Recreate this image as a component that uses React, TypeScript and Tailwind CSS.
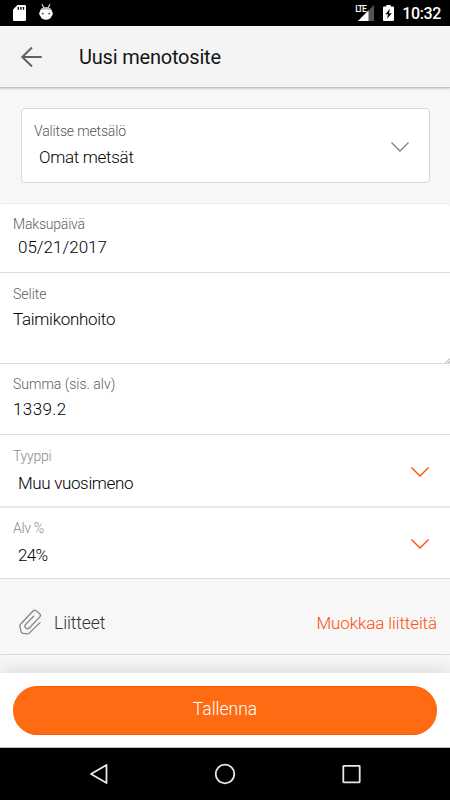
import React from 'react';
import clsx from 'clsx';

interface FieldProps {
  label: string;
  value: string;
  className?: string;
  labelClass?: string;
  valueClass?: string;
  chevron?: boolean;
  resizable?: boolean;
}

const Chevron: React.FC<{ className?: string }> = ({ className }) => (
  <svg viewBox="0 0 20 12" className={clsx('w-5 h-3 shrink-0', className)} fill="none" stroke="currentColor" strokeWidth="1.4">
    <path d="M1.5 1.6 L10 10.1 L18.5 1.6" />
  </svg>
);

const Field: React.FC<FieldProps> = ({ label, value, className, labelClass, valueClass, chevron, resizable }) => (
  <div className={clsx('flex justify-between border-[#dcdcdc] bg-white pl-[13px] pr-5', className)}>
    <div className="flex flex-col whitespace-nowrap">
      <span className={clsx('text-[14px] leading-5', labelClass)}>{label}</span>
      <span className={clsx('text-[17px] leading-5 text-black', valueClass)}>{value}</span>
    </div>
    {chevron && <Chevron className="mt-5 text-[#ff4d0d]" />}
    {resizable && (
      <svg viewBox="0 0 5 5" className="-mr-5 h-[5px] w-[5px] self-end" stroke="#777" strokeWidth="0.7">
        <path d="M0.5 5 L5 0.5 M3 5 L5 3" />
      </svg>
    )}
  </div>
);

const StatusBar: React.FC = () => (
  <div className="flex h-[26px] shrink-0 items-center bg-black text-white">
    <svg viewBox="0 0 13 16" className="ml-[13px] h-4 w-[13px]">
      <path d="M4.5 0 H12 Q13 0 13 1 V15 Q13 16 12 16 H1 Q0 16 0 15 V4.5Z" fill="#fff" />
      <path d="M5.3 2 V4.8 M7.9 2 V4.8 M10.5 2 V4.8" stroke="#000" strokeWidth="1.3" />
    </svg>
    <svg viewBox="0 0 14 16" className="-mt-0.5 ml-[13px] h-4 w-[14px]">
      <path d="M3 0.3 L5 4 M11 0.3 L9 4" stroke="#ddd" strokeWidth="1.2" />
      <path d="M1.2 6.5 Q2 2.9 7 2.9 Q12 2.9 12.8 6.5Z" fill="#bbb" />
      <path d="M1.2 6 Q7 4.8 12.8 6 V7.5 L13.8 8.5 Q14 11 12.6 12 Q11.5 15.8 7 15.8 Q2.5 15.8 1.4 12 Q0 11 0.2 8.5 L1.2 7.5Z" fill="#fff" />
      <circle cx="3.8" cy="9.6" r="0.9" fill="#333" />
      <circle cx="10.2" cy="9.6" r="0.9" fill="#333" />
    </svg>
    <div className="ml-auto flex items-center">
      <div className="relative h-4 w-[19px]">
        <svg viewBox="0 0 19 16" className="h-4 w-[19px]">
          <path d="M19 0 V16 H3Z" fill="#555" />
          <path d="M13.5 5.5 V16 H3Z" fill="#fff" />
        </svg>
        <span className="absolute left-0 top-0 h-[7px] w-[11px] whitespace-nowrap bg-black text-[8.5px] font-medium leading-[8px] tracking-[-0.9px]">LTE</span>
      </div>
      <svg viewBox="0 0 11 16" className="ml-[9px] h-4 w-[11px]">
        <path d="M3.3 0 H7.7 V1.5 H10 Q11 1.5 11 2.5 V15 Q11 16 10 16 H1 Q0 16 0 15 V2.5 Q0 1.5 1 1.5 H3.3Z" fill="#fff" />
        <path d="M7 3.8 L2.3 9.2 H5 L4 13.8 L8.8 8.2 H6Z" fill="#000" />
      </svg>
      <span className="ml-2 mr-[9px] mt-0.5 text-base font-medium leading-5 tracking-[-0.35px]">10:32</span>
    </div>
  </div>
);

const App: React.FC = () => {
  return (
    <div className="flex h-[800px] w-[450px] flex-col overflow-hidden bg-[#f7f7f7] font-['Roboto','Liberation_Sans',sans-serif] font-light">
      <StatusBar />

      {/* Header */}
      <header className="z-10 flex h-[62px] shrink-0 items-center border-b border-[#c4c4c4] bg-[#f4f4f4] shadow-[0_1px_2px_rgba(0,0,0,0.18)]">
        <svg viewBox="0 0 22 22" className="ml-5 h-[22px] w-[22px]" fill="none" stroke="#616161" strokeWidth="2">
          <path d="M12 1.5 L2.3 11 L12 20.5 M2.3 11 H21.7" />
        </svg>
        <h1 className="ml-[37px] text-xl font-normal leading-6 tracking-[-0.2px] text-[#151515]">Uusi menotosite</h1>
      </header>

      {/* Forest estate selector */}
      <div className="ml-[21px] mr-5 mt-5 flex h-[75px] shrink-0 justify-between rounded-[4px] border border-[#d9d9d9] bg-white pl-3 pr-[19px] pt-3">
        <div className="flex flex-col whitespace-nowrap">
          <span className="text-[14px] leading-5 tracking-[-0.15px] text-[#555]">Valitse metsälö</span>
          <span className="ml-[5px] mt-1.5 text-[17px] leading-5 tracking-[-0.3px] text-black">Omat metsät</span>
        </div>
        <Chevron className="mt-5 text-[#858585]" />
      </div>

      {/* Receipt details */}
      <div className="mt-5 flex shrink-0 flex-col">
        <Field label="Maksupäivä" value="05/21/2017" className="h-[70px] rounded-t-[4px] border-b border-t border-t-[#ececec] pt-2.5" labelClass="tracking-[-0.2px] text-[#606060]" valueClass="ml-[5px] mt-[3px]" />
        <Field label="Selite" value="Taimikonhoito" className="h-[91px] border-b pt-[11px]" labelClass="text-[#606060]" valueClass="mt-[5px] tracking-[-0.28px]" resizable />
        <Field label="Summa (sis. alv)" value="1339.2" className="h-[71px] border-b pt-2.5" labelClass="text-[#606060]" valueClass="mt-[5px] tracking-[0.4px]" />
        <Field label="Tyyppi" value="Muu vuosimeno" className="h-[73px] border-b-2 border-b-[#e8e8e8] pt-[11px]" labelClass="tracking-[-0.25px] text-[#8a8a8a]" valueClass="ml-[5px] mt-[7px] tracking-[-0.35px]" chevron />
        <Field label="Alv %" value="24%" className="h-[71px] border-b pt-2.5" labelClass="tracking-[-0.3px] text-[#8a8a8a]" valueClass="ml-[5px] mt-[7px] tracking-[-0.7px]" chevron />
      </div>

      {/* Attachments */}
      <div className="flex h-[76px] shrink-0 items-center border-b border-[#dcdcdc] pl-[18px] pr-[13px] pt-3">
        <svg viewBox="0 0 24 26" className="-mt-0.5 h-[26px] w-6" fill="none" stroke="#858585" strokeWidth="1.3" strokeLinecap="round" strokeLinejoin="round">
          <path d="M22 13.6 L11.8 23.6 Q10.6 24.9 9 24.8 L5.2 24.4 Q3.4 24.1 3 22.3 L1.9 17.7 Q1.5 16.2 2.7 15 L15 2 Q16.7 0.5 18.2 1.8 L21.7 4.7 Q23.2 6.2 21.8 7.9 L11.5 18.8 Q9.6 20.6 7.9 19.2 Q6 17.7 7.5 15.6 L15.6 7.2" />
        </svg>
        <span className="ml-3 text-[17.5px] leading-5 tracking-[-0.1px] text-[#333]">Liitteet</span>
        <button className="ml-auto whitespace-nowrap text-[17px] leading-5 tracking-[-0.1px] text-[#ff4d0d]">Muokkaa liitteitä</button>
      </div>

      {/* Save */}
      <div className="mt-auto flex h-[75px] shrink-0 border-b border-[#bdbdbd] bg-white px-[13px] pt-[13px] shadow-[0_-2px_18px_rgba(0,0,0,0.13)]">
        <button className="h-[49px] w-full rounded-full border-y border-[#ff5a00] bg-[#ff6b12] pb-0.5 text-[17.5px] text-white">
          Tallenna
        </button>
      </div>

      {/* Navigation bar */}
      <nav className="flex h-[52px] shrink-0 items-center justify-between bg-black px-[89px]">
        <svg viewBox="0 0 20 22" className="h-[22px] w-5" fill="none" stroke="#e8e8e8" strokeWidth="1.8" strokeLinejoin="round">
          <path d="M17.5 2 V20 L2 11Z" />
        </svg>
        <svg viewBox="0 0 22 22" className="h-[22px] w-[22px]" fill="none" stroke="#e8e8e8" strokeWidth="1.8">
          <circle cx="11" cy="11" r="9.3" />
        </svg>
        <svg viewBox="0 0 20 20" className="h-5 w-5" fill="none" stroke="#e8e8e8" strokeWidth="1.8">
          <rect x="2.3" y="1.9" width="16.4" height="16.4" rx="0.5" />
        </svg>
      </nav>
    </div>
  );
};

export default App;
